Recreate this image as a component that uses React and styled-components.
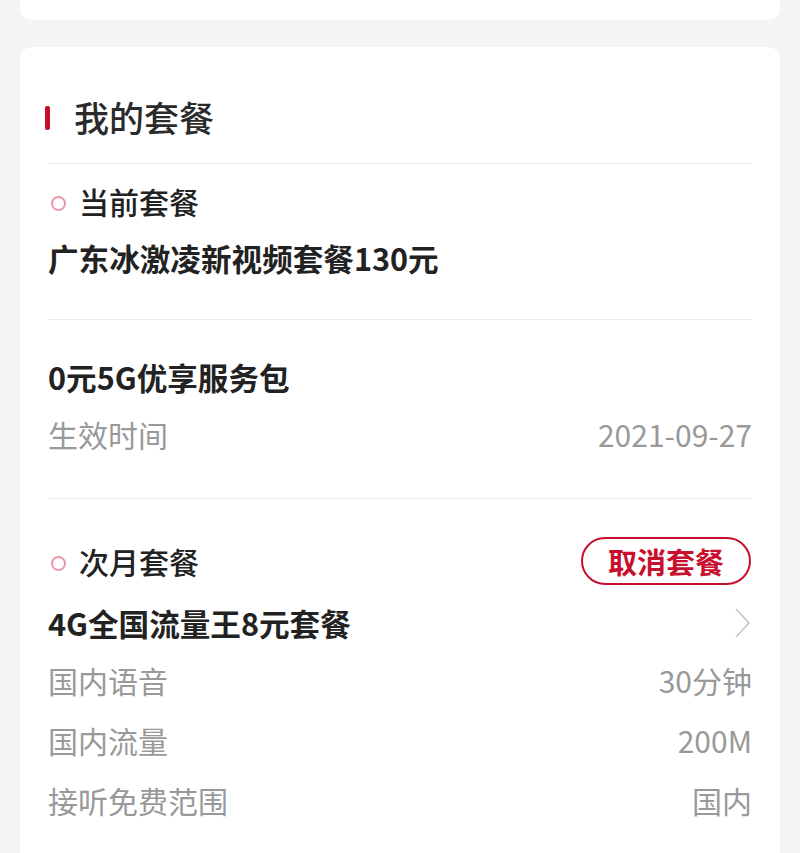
import React from 'react'
import styled, { createGlobalStyle } from 'styled-components'

const GlobalStyle = createGlobalStyle`
	html, body {
		margin: 0;
		padding: 0;
		background: #f4f4f4;
		height: 853px;
		overflow: hidden;
	}
	body {
		font-family: 'Noto Sans CJK SC', 'Noto Sans', sans-serif;
		color: #222;
	}
`

const Page = styled.div`
	padding: 0 20px;
`

const TopCard = styled.div`
	height: 20px;
	background: #fff;
	border-radius: 0 0 12px 12px;
`

const Card = styled.div`
	margin-top: 27px;
	background: #fff;
	border-radius: 12px 12px 0 0;
	padding: 0 28px;
	height: 900px;
`

const Header = styled.div`
	display: flex;
	align-items: center;
	height: 44px;
	padding: 47px 0 25px;
	border-bottom: 1px solid #ececec;
`

const Bar = styled.span`
	width: 5px;
	height: 24px;
	border-radius: 2px;
	background: #c8102e;
	margin: 3px 24px 0 -3px;
`

const HeaderTitle = styled.h2`
	margin: 0;
	font-size: 35px;
	font-weight: 500;
	color: #2b2b2b;
`

const Section = styled.div`
	padding: ${({ pt }) => pt}px 0 ${({ pb }) => pb}px;
	border-bottom: ${({ last }) => (last ? 'none' : '1px solid #ececec')};
`

const Row = styled.div`
	display: flex;
	align-items: center;
	justify-content: space-between;
	height: ${({ h }) => h}px;
	margin-top: ${({ mt }) => mt || 0}px;
`

const Label = styled.div`
	display: flex;
	align-items: center;
	font-size: 30px;
	font-weight: 500;
	color: #222;
`

const Dot = styled.span`
	width: 11px;
	height: 11px;
	border: 2.5px solid #e799a5;
	border-radius: 50%;
	margin: 4px 13px 0 3px;
`

const Name = styled.div`
	font-size: 30.6px;
	font-weight: 700;
	color: #222;
`

const Key = styled.div`
	font-size: 30px;
	color: #999;
`

const Value = styled.div`
	font-size: 30px;
	color: #999;
`

const CancelButton = styled.button`
	height: 48px;
	width: 170px;
	border: 2px solid #c8102e;
	border-radius: 24px;
	background: #fff;
	color: #c8102e;
	font-family: inherit;
	font-size: 29px;
	font-weight: 700;
	padding: 0;
	margin-right: 1px;
`

const Chevron = () => (
	<svg width='18' height='32' viewBox='0 0 18 32'>
		<polyline points='2,2 15,16 2,30' fill='none' stroke='#c4c4c4' strokeWidth='1.6' />
	</svg>
)

const details = [
	['国内语音', '30分钟'],
	['国内流量', '200M'],
	['接听免费范围', '国内'],
]

export default function App() {
	return (
		<Page>
			<GlobalStyle />
			<TopCard />
			<Card>
				<Header>
					<Bar />
					<HeaderTitle>我的套餐</HeaderTitle>
				</Header>

				<Section pt={9} pb={32}>
					<Row h={56}>
						<Label>
							<Dot />
							当前套餐
						</Label>
					</Row>
					<Row h={58}>
						<Name>广东冰激凌新视频套餐130元</Name>
					</Row>
				</Section>

				<Section pt={29} pb={35}>
					<Row h={56}>
						<Name>0元5G优享服务包</Name>
					</Row>
					<Row h={58}>
						<Key>生效时间</Key>
						<Value>2021-09-27</Value>
					</Row>
				</Section>

				<Section pt={37} pb={0} last>
					<Row h={50}>
						<Label>
							<Dot />
							次月套餐
						</Label>
						<CancelButton>取消套餐</CancelButton>
					</Row>
					<Row h={55} mt={9}>
						<Name>4G全国流量王8元套餐</Name>
						<Chevron />
					</Row>
					{details.map(([k, v]) => (
						<Row h={60} key={k}>
							<Key>{k}</Key>
							<Value>{v}</Value>
						</Row>
					))}
				</Section>
			</Card>
		</Page>
	)
}
